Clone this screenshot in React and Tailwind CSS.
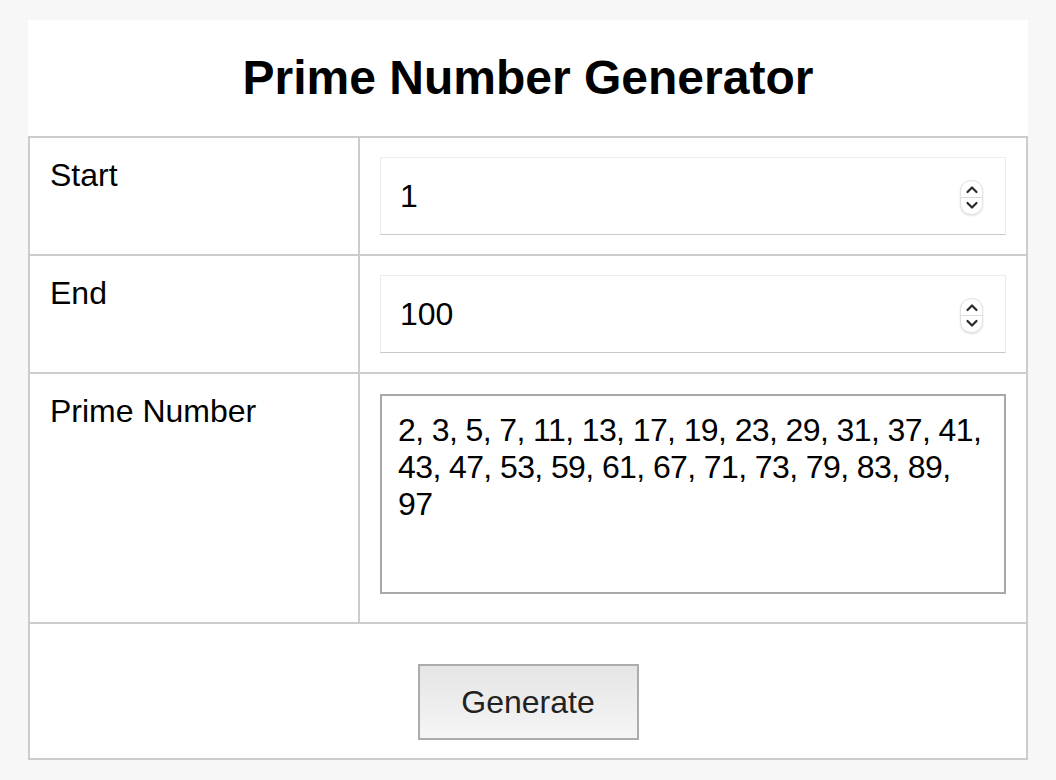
import { useState } from 'react';

const primesBetween = (start, end) => {
  const out = [];
  for (let n = Math.max(2, start); n <= end; n++) {
    let isPrime = true;
    for (let d = 2; d * d <= n; d++) {
      if (n % d === 0) {
        isPrime = false;
        break;
      }
    }
    if (isPrime) out.push(n);
  }
  return out;
};

const Spinner = () => (
  <div className="absolute right-[23px] top-[23px] flex h-[35px] w-[23px] flex-col items-center rounded-[11px] border border-[#e2e2e2] bg-white shadow-[0_1px_2px_rgba(0,0,0,0.12)]">
    <svg width="14" height="16" viewBox="0 0 14 16">
      <path d="M2.5 11 L7 6.5 L11.5 11" fill="none" stroke="#2a2a2a" strokeWidth="2.2" strokeLinecap="round" strokeLinejoin="round" />
    </svg>
    <div className="h-px w-full bg-[#dcdcdc]" />
    <svg width="14" height="16" viewBox="0 0 14 16">
      <path d="M2.5 5 L7 9.5 L11.5 5" fill="none" stroke="#2a2a2a" strokeWidth="2.2" strokeLinecap="round" strokeLinejoin="round" />
    </svg>
  </div>
);

const NumberField = ({ value, onChange }) => (
  <div className="relative">
    <input
      type="number"
      value={value}
      onChange={(e) => onChange(e.target.value)}
      className="block h-[78px] w-full border border-[#ececec] border-b-[#c9c9c9] bg-white pl-[19px] pr-14 text-[32px] leading-[normal] text-black outline-none [appearance:textfield] [&::-webkit-inner-spin-button]:appearance-none [&::-webkit-outer-spin-button]:appearance-none"
    />
    <Spinner />
  </div>
);

const App = () => {
  const [start, setStart] = useState('1');
  const [end, setEnd] = useState('100');
  const [result, setResult] = useState(primesBetween(1, 100).join(', '));

  const generate = () => {
    setResult(primesBetween(parseInt(start, 10) || 0, parseInt(end, 10) || 0).join(', '));
  };

  return (
    <div
      className="min-h-screen bg-[#f7f7f7] pt-5"
      style={{ fontFamily: '"Liberation Sans", Arial, sans-serif' }}
    >
      <div className="mx-auto w-[1000px] bg-white">
        <div className="flex h-[116px] items-center justify-center">
          <h2 className="text-[48px] font-bold text-black">Prime Number Generator</h2>
        </div>
        <div className="border-2 border-[#cccccc] text-[32px] leading-[normal] text-black">
          <div className="flex border-b-2 border-[#cccccc]">
            <div className="w-[330px] shrink-0 border-r-2 border-[#cccccc] px-5 py-[19px]">Start</div>
            <div className="flex-1 px-5 py-[19px]">
              <NumberField value={start} onChange={setStart} />
            </div>
          </div>
          <div className="flex border-b-2 border-[#cccccc]">
            <div className="w-[330px] shrink-0 border-r-2 border-[#cccccc] px-5 py-[19px]">End</div>
            <div className="flex-1 px-5 py-[19px]">
              <NumberField value={end} onChange={setEnd} />
            </div>
          </div>
          <div className="flex border-b-2 border-[#cccccc]">
            <div className="w-[330px] shrink-0 border-r-2 border-[#cccccc] px-5 py-[19px]">Prime Number</div>
            <div className="flex-1 px-5 pb-[28px] pt-5">
              <textarea
                readOnly
                value={result}
                className="block h-[200px] w-full resize-none border-2 border-[#a9a9a9] bg-white pb-[14px] pt-[16px] pl-4 pr-3 text-[32px] leading-[36.8px] tracking-[-0.6px] text-black outline-none"
              />
            </div>
          </div>
          <div className="flex justify-center pb-[18px] pt-10">
            <button
              onClick={generate}
              className="h-[76px] w-[221px] border-2 border-[#acacac] bg-gradient-to-b from-[#e5e5e5] to-[#f5f5f5] text-[32px] text-[#222]"
            >
              Generate
            </button>
          </div>
        </div>
      </div>
    </div>
  );
};

export default App;
